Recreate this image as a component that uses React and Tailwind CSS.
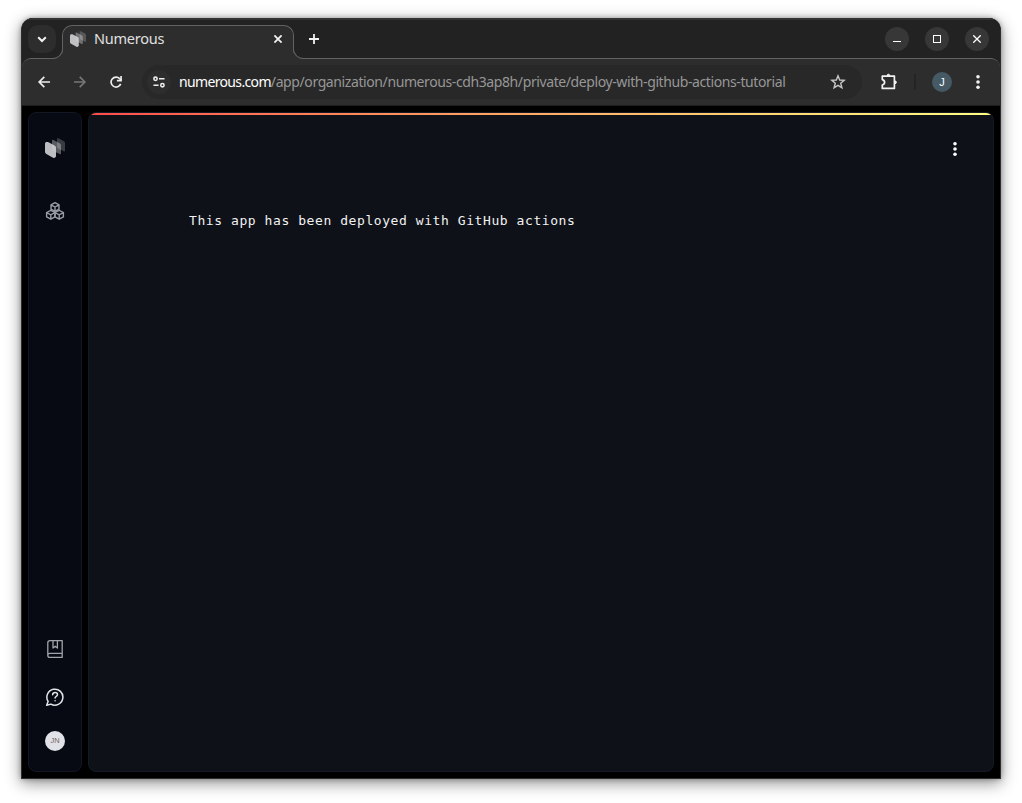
import React from 'react';

function Logo({ className }) {
  return (
    <svg className={className} viewBox="0 0 20 20">
      <path d="M12 1.2Q12-.4 13.4.3L19 3.2Q20 3.8 20 5V12.4Q20 14 18.6 13.3L13 10.4Q12 9.8 12 8.6Z" fill="#fff" fillOpacity=".2" />
      <path d="M7 2.9Q7 1.3 8.4 2L14.6 5.2Q16 5.9 16 7.2V15.2Q16 16.8 14.6 16.1L8.4 12.9Q7 12.2 7 10.9Z" fill="#fff" fillOpacity=".33" />
      <path d="M0 5.8Q0 4.2 1.4 4L3 4L9.6 7.4Q11 8.2 11 9.4V18.4Q9.6 20.4 8 19.8L1.4 16Q0 15.2 0 14Z" fill="#d0d0d4" fillOpacity=".9" />
    </svg>
  );
}

function Dots({ className }) {
  return (
    <svg className={className} viewBox="0 0 4 16" fill="currentColor">
      <circle cx="2" cy="2.8" r="1.8" /><circle cx="2" cy="8" r="1.8" /><circle cx="2" cy="13.2" r="1.8" />
    </svg>
  );
}

function WindowButton({ children }) {
  return <button className="flex size-6 items-center justify-center rounded-full bg-[#373737]">{children}</button>;
}

function TitleBar() {
  return (
    <div className="flex h-[39px] items-start bg-[#222222] shadow-[inset_0_2px_0_#343434]">
      <button className="ml-[6px] mt-[7px] flex size-7 items-center justify-center rounded-[10px] bg-[#2d2d2d]">
        <svg className="size-[10px]" viewBox="0 0 10 10" fill="none" stroke="#f2f2f2" strokeWidth="2"><path d="M1.2 3.2L5 7L8.8 3.2" /></svg>
      </button>
      <div className="relative z-10 ml-[6px] mt-[7px] flex h-[34px] w-[232px] items-center rounded-t-[10px] border border-b-0 border-[#626262] bg-[#2d2d2d]">
        <span className="absolute -left-[11px] bottom-0 size-[11px] overflow-hidden">
          <span className="absolute bottom-0 right-0 size-[22px] rounded-br-[10px] border-b border-r border-[#626262] shadow-[5px_5px_0_5px_#2d2d2d]" />
        </span>
        <span className="absolute -right-[11px] bottom-0 size-[11px] overflow-hidden">
          <span className="absolute bottom-0 left-0 size-[22px] rounded-bl-[10px] border-b border-l border-[#626262] shadow-[-5px_5px_0_5px_#2d2d2d]" />
        </span>
        <Logo className="mb-[7px] ml-[7px] size-4" />
        <span className="mb-[7px] ml-[8px] text-[14.5px] tracking-[-0.25px] text-[#e0e0e0]">Numerous</span>
        <svg className="mb-[7px] ml-auto mr-[11px] size-2" viewBox="0 0 8 8" stroke="#f2f2f2" strokeWidth="1.8"><path d="M.4.4L7.6 7.6M7.6.4L.4 7.6" /></svg>
      </div>
      <svg className="ml-[15px] mt-[16px] size-[10px]" viewBox="0 0 10 10" stroke="#f2f2f2" strokeWidth="1.8"><path d="M5 0V10M0 5H10" /></svg>
      <div className="ml-auto mr-[11px] mt-[9px] flex gap-4">
        <WindowButton><span className="mt-[5px] h-px w-2 bg-white" /></WindowButton>
        <WindowButton><span className="size-2 border border-white" /></WindowButton>
        <WindowButton><svg className="size-2" viewBox="0 0 8 8" stroke="#fff" strokeWidth="1.3"><path d="M.3.3L7.7 7.7M7.7.3L.3 7.7" /></svg></WindowButton>
      </div>
    </div>
  );
}

function Toolbar() {
  return (
    <div className="bg-[#222222]">
      <div className="flex h-[48px] items-center rounded-t-[9px] border-b border-t border-b-[#1d1d1d] border-t-[#626262] bg-[#2d2d2d] pl-[16px]">
        <svg className="size-3" viewBox="0 0 12 12" fill="none" stroke="#eee" strokeWidth="1.7"><path d="M12 6H1.3M6.3.8L1.1 6l5.2 5.2" /></svg>
        <svg className="ml-6 size-3" viewBox="0 0 12 12" fill="none" stroke="#777" strokeWidth="1.7"><path d="M0 6H10.7M5.7.8L10.9 6l-5.2 5.2" /></svg>
        <svg className="ml-6 size-3" viewBox="0 0 13 13" fill="none" stroke="#eee" strokeWidth="1.8"><path d="M11.6 8.5A5.4 5.4 0 1 1 10.6 3L12 4.5" /><path d="M12 0V5H7.5" /></svg>
        <div className="ml-[20px] flex h-[34px] w-[720px] items-center rounded-full bg-[#282828] pl-[5px] pr-4">
          <span className="flex size-6 items-center justify-center rounded-full bg-[#2d2d2d]">
            <svg className="size-3" viewBox="0 0 13 13" fill="none" stroke="#eee" strokeWidth="1.7"><circle cx="2.7" cy="3" r="1.8" /><path d="M6.5 3H12.5M.5 10H6" /><circle cx="10.2" cy="10" r="1.8" /></svg>
          </span>
          <span className="mb-[2px] ml-[8px] whitespace-nowrap text-[14px] tracking-[-0.4px] text-[#979797]"><span className="tracking-[-0.65px] text-white">numerous.com</span>/app/organization/numerous-cdh3ap8h/private/deploy-with-github-actions-tutorial</span>
          <svg className="ml-auto size-4 shrink-0" viewBox="0 0 16 16" fill="none" stroke="#c5c5c5" strokeWidth="1.4"><path d="M8 1.8L9.7 6L14.2 6.3L10.7 9.2L11.9 13.8L8 11.3L4.1 13.8L5.3 9.2L1.8 6.3L6.3 6Z" /></svg>
        </div>
        <svg className="ml-[18px] size-[18px]" viewBox="0 0 18 18" fill="none" stroke="#f2f2f2" strokeWidth="1.7" strokeLinejoin="round"><path d="M2.3 3.1H14.4V15.4H2.3V12Q4.6 11.4 4.6 9.3Q4.6 7.2 2.3 6.6Z" /><path d="M7.1 2.6Q7.1 1.2 8.4 1.2Q9.7 1.2 9.7 2.6ZM15 8Q16.4 8 16.4 9.3Q16.4 10.6 15 10.6Z" fill="#f2f2f2" strokeWidth="1" /></svg>
        <span className="ml-4 h-4 w-[2px] bg-[#242424]" />
        <span className="ml-4 flex size-5 items-center justify-center rounded-full bg-[#455a64] font-['Liberation_Sans'] text-[11px] text-white">J</span>
        <Dots className="ml-[24px] h-4 w-1 text-[#f2f2f2]" />
      </div>
    </div>
  );
}

function Sidebar() {
  return (
    <aside className="flex w-[54px] flex-col items-center rounded-lg border border-[#121724] bg-[#070a13]">
      <Logo className="mt-[25px] size-5" />
      <svg className="mt-[43px] size-5" viewBox="0 0 20 20" fill="none" stroke="#9a9ca4" strokeWidth="1.4" strokeLinejoin="round">
        <path d="M10 1.6L14 3.8V8.2L10 10.3L6 8.2V3.8ZM6 3.8L10 6L14 3.8M10 6V10.3" />
        <path d="M5.8 9.3L9.9 11.5V15.9L5.8 18.2L1.6 15.9V11.5ZM1.6 11.5L5.8 13.8L9.9 11.5M5.8 13.8V18.2" />
        <path d="M14.2 9.3L18.4 11.5V15.9L14.2 18.2L10 15.9V11.5ZM10 11.5L14.2 13.8L18.4 11.5M14.2 13.8V18.2" />
      </svg>
      <svg className="mt-auto size-5" viewBox="0 0 20 20" fill="none" stroke="#a2a4aa" strokeWidth="1.3" strokeLinejoin="round">
        <path d="M17.2 1.6H5Q2.8 1.6 2.8 3.8V16.2Q2.8 18.4 5 18.4H17.2ZM17.2 14.4H4.8Q2.8 14.4 2.8 16.2M8 1.8V9L10.2 7.2L12.4 9V1.8" />
      </svg>
      <svg className="mt-[28px] size-5" viewBox="0 0 20 20" fill="none" stroke="#e2e4e9" strokeWidth="1.5" strokeLinecap="round" strokeLinejoin="round">
        <path d="M1.7 18.3L3.1 14.4A8 8 0 1 1 5.9 17.1Z" />
        <path d="M7.6 7.7Q7.8 5.5 10.1 5.5Q12.5 5.5 12.5 7.6Q12.5 8.9 11 9.6Q10.1 10.1 10.1 11.1M10.1 13.7V13.8" />
      </svg>
      <span className="mb-[20px] mt-[24px] flex size-5 items-center justify-center rounded-full bg-[#e0e2e8] font-['Liberation_Sans'] text-[7.5px] text-[#77635a]">JN</span>
    </aside>
  );
}

export default function App() {
  return (
    <div className="h-[803px] w-[1022px] overflow-hidden bg-white pl-[21px] pt-[18px] font-['Noto_Sans',sans-serif]">
      <div className="flex h-[761px] w-[980px] flex-col overflow-hidden rounded-t-[12px] border border-t-0 border-[#2d2d2d] bg-black shadow-[0_4px_16px_rgba(0,0,0,0.45),0_0_5px_rgba(0,0,0,0.3)]">
        <div className="flex flex-col"><TitleBar /><div className="h-px bg-[#222222]" /><Toolbar /></div>
        <div className="flex min-h-0 grow gap-[6px] p-[6px]">
          <Sidebar />
          <main className="flex grow flex-col overflow-hidden rounded-lg border border-[#141925] bg-[#0e1117]">
            <div className="h-[2px] shrink-0 bg-linear-to-r from-[#ff4b4b] to-[#fffd80]" />
            <div className="flex justify-end pr-[36px] pt-[26px]"><Dots className="h-4 w-1 text-white" /></div>
            <p className="ml-[100px] mt-[53px] whitespace-nowrap font-['DejaVu_Sans_Mono',monospace] text-[13px] leading-[22px] tracking-[0.573px] text-[#f2f2f2]">This app has been deployed with GitHub actions</p>
          </main>
        </div>
      </div>
    </div>
  );
}
